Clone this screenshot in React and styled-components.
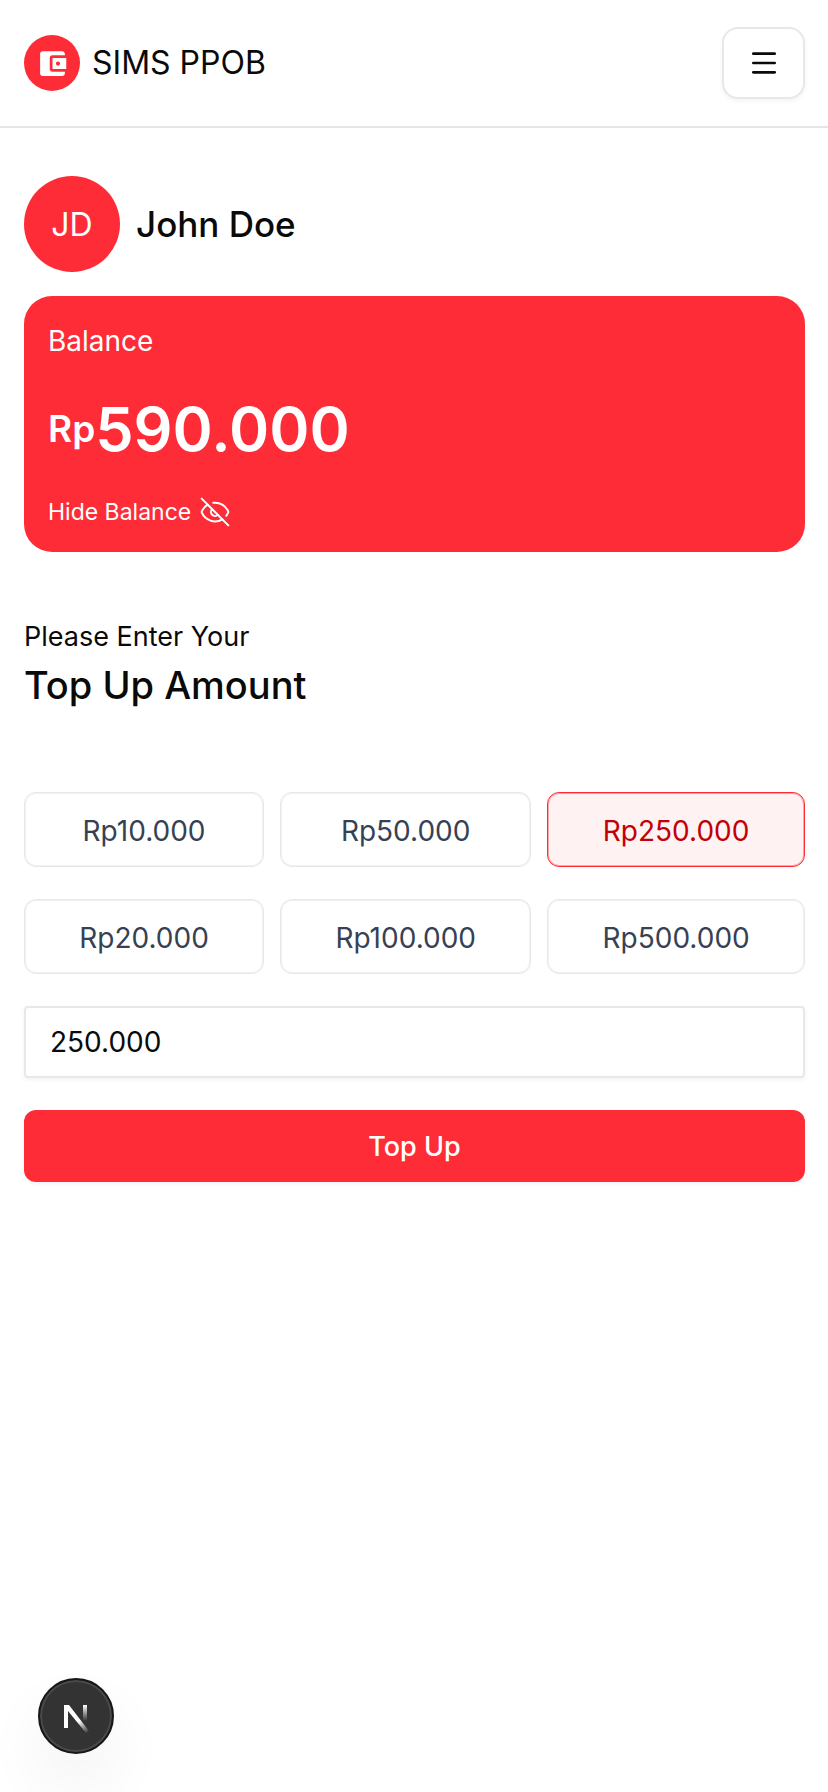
import React, { useState } from "react";
import styled, { createGlobalStyle } from "styled-components";
import { Menu, EyeOff, Eye } from "lucide-react";
import { MdAccountBalanceWallet } from "react-icons/md";

const GlobalStyle = createGlobalStyle`
  *, *::before, *::after { box-sizing: border-box; }
  body {
    margin: 0;
    background: #fff;
    color: #0a0a0a;
    font-family: Inter, "Liberation Sans", sans-serif;
  }
  button, input { font: inherit; color: inherit; margin: 0; }
  button { cursor: pointer; }
  h1, p { margin: 0; }
`;

const Header = styled.header`
  display: flex;
  align-items: center;
  justify-content: space-between;
  padding: 27px 23px 27px 24px;
  border-bottom: 2px solid #e5e5e5;
`;

const Brand = styled.a`
  display: flex;
  align-items: center;
  gap: 12px;
  color: inherit;
  text-decoration: none;
  font-size: 32px;
  line-height: 48px;
`;

const LogoMark = styled.span`
  display: grid;
  place-items: center;
  width: 56px;
  height: 56px;
  border-radius: 50%;
  background: #fe2c37;
  color: #fff;
`;

const MenuButton = styled.button`
  display: grid;
  place-items: center;
  width: 83px;
  height: 72px;
  border: 2px solid #e8e8e8;
  border-radius: 16px;
  background: #fff;
  box-shadow: 0 2px 4px rgba(0, 0, 0, 0.05);
`;

const Main = styled.main`
  display: flex;
  flex-direction: column;
  padding: 48px 23px 48px 24px;
`;

const Profile = styled.div`
  display: flex;
  align-items: center;
  gap: 16px;
  font-size: 35px;
  font-weight: 500;
`;

const Avatar = styled.span`
  display: grid;
  place-items: center;
  width: 96px;
  height: 96px;
  border-radius: 50%;
  background: #fe2c37;
  color: #fff;
  font-size: 32px;
  font-weight: 400;
`;

const BalanceCard = styled.section`
  display: flex;
  flex-direction: column;
  align-items: flex-start;
  justify-content: space-between;
  height: 256px;
  margin-top: 24px;
  padding: 24px;
  border-radius: 28px;
  background: #fe2c37;
  color: #fff;
`;

const CardLabel = styled.p`
  font-size: 28px;
  line-height: 42px;
`;

const Amount = styled.p`
  display: flex;
  align-items: center;
  font-size: 61px;
  line-height: 72px;
  font-weight: 600;
`;

const Currency = styled.span`
  font-size: 37px;
`;

const ToggleButton = styled.button`
  display: flex;
  align-items: center;
  gap: 8px;
  padding: 0;
  border: 0;
  background: none;
  font-size: 23px;
  line-height: 32px;
`;

const Intro = styled.div`
  margin-top: 64px;
`;

const Lead = styled.p`
  font-size: 27px;
  line-height: 42px;
`;

const Title = styled.h1`
  font-size: 38px;
  line-height: 54px;
  font-weight: 500;
`;

const Form = styled.form`
  display: flex;
  flex-direction: column;
  gap: 32px;
  margin-top: 80px;
`;

const Presets = styled.div`
  display: grid;
  grid-template-columns: auto auto auto;
  gap: 32px 16px;
`;

const Preset = styled.button`
  height: 75px;
  padding: 2px 6px 0;
  border: 1px solid ${(p) => (p.$active ? "#fe2c37" : "#e5e7eb")};
  border-radius: 12px;
  background: ${(p) => (p.$active ? "#fef2f2" : "#fff")};
  box-shadow: inset 0 0 0 1px ${(p) => (p.$active ? "rgba(254, 44, 55, 0.4)" : "rgba(229, 231, 235, 0.6)")};
  color: ${(p) => (p.$active ? "#c10007" : "#364153")};
  font-size: 28px;
`;

const AmountInput = styled.input`
  width: 100%;
  height: 72px;
  padding: 0 24px;
  border: 2px solid #e8e8e8;
  border-radius: 4px;
  background: #fff;
  font-size: 28px;
  box-shadow: 0 2px 4px rgba(0, 0, 0, 0.05);
`;

const SubmitButton = styled.button`
  height: 72px;
  border: 0;
  border-radius: 12px;
  background: #fe2c37;
  color: #fff;
  font-size: 27px;
  font-weight: 500;
  box-shadow: 0 2px 4px rgba(0, 0, 0, 0.05);
`;

const DevButton = styled.button`
  position: fixed;
  left: 38px;
  bottom: 38px;
  display: grid;
  place-items: center;
  width: 76px;
  height: 76px;
  padding: 0;
  border: 2px solid #171717;
  border-radius: 50%;
  background: #333;
  box-shadow: inset 0 0 0 2px #4a4a4a, 0 32px 64px rgba(0, 0, 0, 0.06);
`;

const presets = [10, 50, 250, 20, 100, 500];

function NextMark() {
  return (
    <svg width="28" height="34" viewBox="0 0 28 34" fill="none" aria-hidden="true">
      <defs>
        <linearGradient id="stem" x1="0" y1="6" x2="0" y2="22" gradientUnits="userSpaceOnUse">
          <stop stopColor="#fff" />
          <stop offset="1" stopColor="#fff" stopOpacity="0" />
        </linearGradient>
        <linearGradient id="stroke" x1="17" y1="22" x2="26" y2="34" gradientUnits="userSpaceOnUse">
          <stop stopColor="#fff" />
          <stop offset="1" stopColor="#fff" stopOpacity="0" />
        </linearGradient>
      </defs>
      <path d="M2 29V6h5l20 26-3 2L6 12v17z" fill="url(#stroke)" />
      <path d="M21 6h4v16h-4z" fill="url(#stem)" />
    </svg>
  );
}

export default function App() {
  const [amount, setAmount] = useState("250.000");
  const [visible, setVisible] = useState(true);
  const ToggleIcon = visible ? EyeOff : Eye;

  return (
    <>
      <GlobalStyle />
      <Header>
        <Brand href="#">
          <LogoMark>
            <MdAccountBalanceWallet size={33} />
          </LogoMark>
          SIMS PPOB
        </Brand>
        <MenuButton type="button" aria-label="Open menu">
          <Menu size={32} strokeWidth={2} />
        </MenuButton>
      </Header>
      <Main>
        <Profile>
          <Avatar>JD</Avatar>
          <span>John Doe</span>
        </Profile>
        <BalanceCard>
          <CardLabel>Balance</CardLabel>
          <Amount>
            <Currency>Rp</Currency>
            {visible ? "590.000" : "•••••••"}
          </Amount>
          <ToggleButton type="button" onClick={() => setVisible(!visible)}>
            {visible ? "Hide Balance" : "Show Balance"}
            <ToggleIcon size={32} strokeWidth={1.5} />
          </ToggleButton>
        </BalanceCard>
        <Intro>
          <Lead>Please Enter Your</Lead>
          <Title>Top Up Amount</Title>
        </Intro>
        <Form onSubmit={(e) => e.preventDefault()}>
          <Presets>
            {presets.map((n) => (
              <Preset
                key={n}
                type="button"
                $active={amount === `${n}.000`}
                onClick={() => setAmount(`${n}.000`)}
              >
                Rp{n}.000
              </Preset>
            ))}
          </Presets>
          <AmountInput
            aria-label="Top up amount"
            inputMode="numeric"
            value={amount}
            onChange={(e) => setAmount(e.target.value)}
          />
          <SubmitButton type="submit">Top Up</SubmitButton>
        </Form>
      </Main>
      <DevButton type="button" aria-label="Open developer tools">
        <NextMark />
      </DevButton>
    </>
  );
}
